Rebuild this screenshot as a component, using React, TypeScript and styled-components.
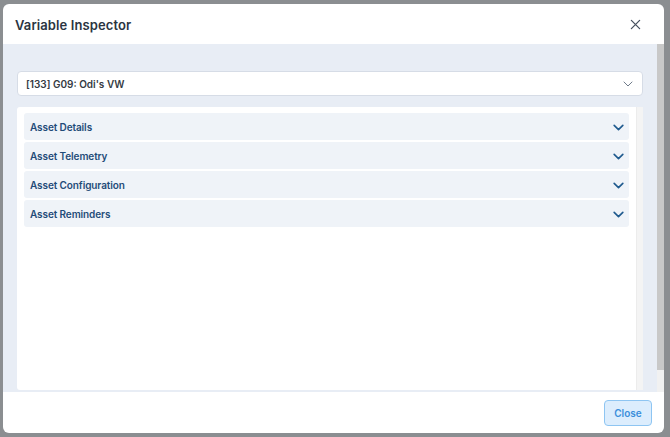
import React from "react";
import styled, { createGlobalStyle } from "styled-components";

const Global = createGlobalStyle`
  html, body { margin: 0; padding: 0; }
  body {
    width: 670px; height: 437px; overflow: hidden;
    background: #8b8e91;
    font-family: Inter, "Noto Sans", sans-serif;
  }
  * { box-sizing: border-box; }
`;

const Backdrop = styled.div`
  width: 670px;
  height: 437px;
  padding: 4px 6px 4px 3px;
  display: flex;
`;

const Modal = styled.div`
  flex: 1;
  background: #ffffff;
  border-radius: 6px;
  display: flex;
  flex-direction: column;
  overflow: hidden;
`;

const Header = styled.div`
  height: 40px;
  flex: none;
  display: flex;
  align-items: center;
  justify-content: space-between;
  padding: 1px 22px 0 12px;
`;

const Title = styled.h2`
  margin: 0;
  font-size: 13px;
  font-weight: 600;
  color: #2b3441;
  letter-spacing: 0.1px;
`;

const IconButton = styled.button`
  border: none;
  background: none;
  padding: 0;
  width: 14px;
  height: 14px;
  display: flex;
  align-items: center;
  justify-content: center;
  color: #4a5462;
  cursor: pointer;
`;

const BodyWrap = styled.div`
  flex: 1;
  display: flex;
  background: #e8edf5;
  min-height: 0;
`;

const Body = styled.div`
  flex: 1;
  padding: 27px 14px 2px 14px;
  display: flex;
  flex-direction: column;
  gap: 11px;
`;

const Scrollbar = styled.div`
  width: 7px;
  flex: none;
  background: #f1f1f1;
  display: flex;
  flex-direction: column;
`;

const Thumb = styled.div`
  height: 326px;
  background: #c8c8c8;
`;

const Select = styled.div`
  height: 25px;
  flex: none;
  background: #fff;
  border: 1px solid #d6dce6;
  border-radius: 4px;
  display: flex;
  align-items: center;
  justify-content: space-between;
  padding: 0 8px 0 8px;
  font-size: 10px;
  font-weight: 600;
  color: #343a43;
`;

const Panel = styled.div`
  flex: 1;
  background: #fff;
  border-radius: 3px;
  display: flex;
  min-height: 0;
`;

const PanelInner = styled.div`
  flex: 1;
  padding: 6px 7px;
  display: flex;
  flex-direction: column;
  gap: 2px;
`;

const PanelTrack = styled.div`
  width: 7px;
  flex: none;
  background: #f4f4f4;
  border-left: 1px solid #ececec;
`;

const Item = styled.div`
  height: 27px;
  background: #eff3f8;
  border-radius: 3px;
  display: flex;
  align-items: center;
  justify-content: space-between;
  padding: 1px 4px 0 6px;
  font-size: 10px;
  font-weight: 600;
  letter-spacing: -0.1px;
  color: #1f4c78;
`;

const Footer = styled.div`
  height: 41px;
  flex: none;
  display: flex;
  align-items: center;
  justify-content: flex-end;
  padding: 0 12px 0 0;
`;

const CloseButton = styled.button`
  width: 48px;
  height: 26px;
  margin-top: 1px;
  background: #dcedfd;
  border: 1px solid #8ec5f2;
  border-radius: 4px;
  color: #3b8fdb;
  font-family: Inter, "Noto Sans", sans-serif;
  font-size: 10px;
  font-weight: 600;
  cursor: pointer;
`;

const Chevron = ({ color, size, width }: { color: string; size: number; width: number }) => (
  <svg width={size} height={size} viewBox="0 0 24 24" fill="none" stroke={color} strokeWidth={width} strokeLinecap="round" strokeLinejoin="round">
    <path d="M4 8l8 8 8-8" />
  </svg>
);

const items = ["Asset Details", "Asset Telemetry", "Asset Configuration", "Asset Reminders"];

export default function App() {
  return (
    <>
      <Global />
      <Backdrop>
        <Modal>
          <Header>
            <Title>Variable Inspector</Title>
            <IconButton aria-label="close">
              <svg width="11" height="11" viewBox="0 0 12 12" stroke="currentColor" strokeWidth="1.4" strokeLinecap="round">
                <path d="M1.5 1.5l9 9M10.5 1.5l-9 9" />
              </svg>
            </IconButton>
          </Header>
          <BodyWrap>
            <Body>
              <Select>
                <span>[133] G09: Odi's VW</span>
                <Chevron color="#6f7b8a" size={12} width={2} />
              </Select>
              <Panel>
                <PanelInner>
                  {items.map((t) => (
                    <Item key={t}>
                      <span>{t}</span>
                      <Chevron color="#1f5a8e" size={13} width={3} />
                    </Item>
                  ))}
                </PanelInner>
                <PanelTrack />
              </Panel>
            </Body>
            <Scrollbar>
              <Thumb />
            </Scrollbar>
          </BodyWrap>
          <Footer>
            <CloseButton>Close</CloseButton>
          </Footer>
        </Modal>
      </Backdrop>
    </>
  );
}
